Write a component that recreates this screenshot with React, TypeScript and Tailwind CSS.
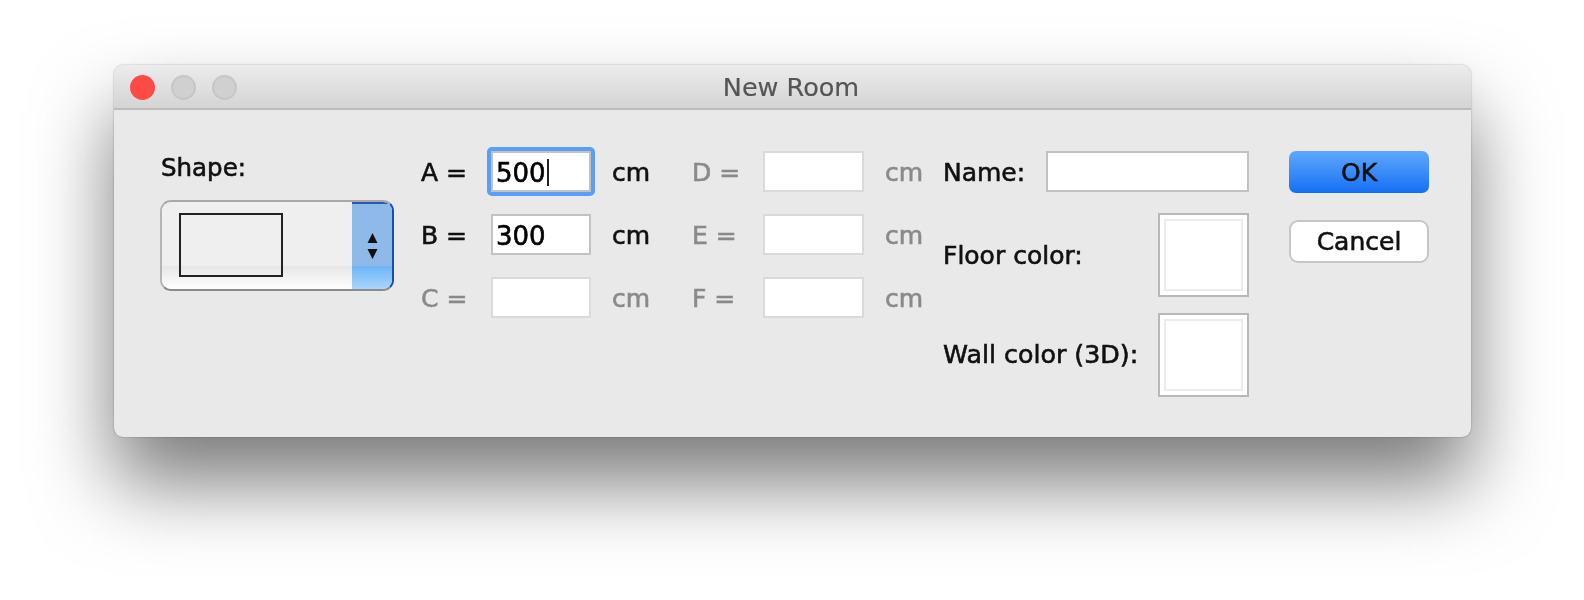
const FONT = "font-['DejaVu_Sans',sans-serif]";

const Field = ({ value, caret, focused, disabled }: { value?: string; caret?: boolean; focused?: boolean; disabled?: boolean }) => (
  <div
    className={`flex h-[41px] w-full items-center bg-white pl-[3px] pt-[2px] text-[26px] leading-none text-black border-2 ${
      disabled ? "border-[#dadada]" : "border-[#c2c2c2]"
    } ${focused ? "outline-[4px] outline-[#5a9ef5] rounded-[1px] border-[#5a9ef5]" : ""}`}
  >
    {value}
    {caret && <span className="ml-[1px] h-[27px] w-[2px] bg-[#222]" />}
  </div>
);

const FieldRow = ({ label, value, caret, focused, disabled }: { label: string; value?: string; caret?: boolean; focused?: boolean; disabled?: boolean }) => (
  <>
    <div className={`pt-[1px] text-[25px] leading-none ${disabled ? "text-[#8a8a8a]" : "text-[#111]"}`}>{label}</div>
    <Field value={value} caret={caret} focused={focused} disabled={disabled} />
  </>
);

const Unit = ({ disabled }: { disabled?: boolean }) => (
  <div className={`pl-[21px] pt-[1px] text-[25px] leading-none ${disabled ? "text-[#8a8a8a]" : "text-[#111]"}`}>cm</div>
);

const Swatch = () => (
  <div className="h-[84px] w-[91px] border-2 border-[#b8b8b8] bg-white p-[4px]">
    <div className="h-full w-full border-2 border-[#ececec] bg-white" />
  </div>
);

const ShapeSelect = () => (
  <div className="ml-[-1px] flex h-[91px] w-[234px] overflow-hidden rounded-[11px] border-2 border-t-[#a9a9a9] border-r-[#174fb8] border-b-[#8b8b8b] border-l-[#b5b5b5]">
    <div className="flex-1 bg-[linear-gradient(to_bottom,#efefef_0%,#efefef_74%,#e6e6e6_74%,#ffffff_100%)] pl-[17px] pt-[11px]">
      <div className="h-[64px] w-[104px] border-2 border-[#222]" />
    </div>
    <div className="flex w-[40px] items-start justify-center border-t-2 border-t-[#2a58b0] bg-[linear-gradient(to_bottom,#8fb9e9_0%,#8fb9e9_73%,#6db4f6_73%,#a9d6fb_100%)] pt-[29px]">
      <svg width="11" height="26" viewBox="0 0 11 26">
        <path d="M5.5 0 L10.5 10 L0.5 10 Z M0.5 16 L10.5 16 L5.5 26 Z" fill="#111" />
      </svg>
    </div>
  </div>
);

export default function App() {
  return (
    <div className={`h-[600px] w-[1584px] overflow-hidden bg-white pl-[114px] pt-[65px] [-webkit-text-stroke:0.6px_currentColor] ${FONT}`}>
      <div className="flex h-[372px] w-[1357px] flex-col rounded-[9px] bg-[#e9e9e9] shadow-[0_0_2px_rgba(0,0,0,0.35),0_46px_80px_rgba(0,0,0,0.52)] blur-[0.6px]">
        <div className="relative flex h-[45px] items-center justify-center rounded-t-[9px] border-b-2 border-[#bcbcbc] bg-gradient-to-b from-[#ececec] to-[#d4d4d4]">
          <div className="absolute left-[16px] top-[10px] flex gap-[16px]">
            <span className="h-[25px] w-[25px] rounded-full bg-[#fb4b46]" />
            <span className="h-[25px] w-[25px] rounded-full border-2 border-[#c6c6c6] bg-[#d0d0d0]" />
            <span className="h-[25px] w-[25px] rounded-full border-2 border-[#c6c6c6] bg-[#d0d0d0]" />
          </div>
          <span className="pr-[3px] pt-[3px] text-[25.5px] leading-none text-[#555] [-webkit-text-stroke:0.2px_currentColor]">New Room</span>
        </div>

        <div className="flex pl-[47px] pt-[41px]">
          <div className="w-[260px]">
            <div className="mb-[17px] pt-[2px] text-[24.5px] leading-[30px] text-[#111]">Shape:</div>
            <ShapeSelect />
          </div>

          <div className="grid grid-cols-[70px_100px_101px_71px_101px_79px] items-center gap-y-[22px] self-start">
            <FieldRow label="A =" value="500" caret focused />
            <Unit />
            <FieldRow label="D =" disabled />
            <Unit disabled />
            <FieldRow label="B =" value="300" />
            <Unit />
            <FieldRow label="E =" disabled />
            <Unit disabled />
            <FieldRow label="C =" disabled />
            <Unit disabled />
            <FieldRow label="F =" disabled />
            <Unit disabled />
          </div>

          <div className="flex w-[306px] flex-col text-[25px] leading-none text-[#111]">
            <div className="flex h-[41px] items-center justify-between">
              <span className="pt-[1px]">Name:</span>
              <div className="w-[203px]"><Field /></div>
            </div>
            <div className="mt-[21px] flex items-center justify-between">
              <span>Floor color:</span>
              <Swatch />
            </div>
            <div className="mt-[16px] flex items-center justify-between">
              <span className="text-[25.3px]">Wall color (3D):</span>
              <Swatch />
            </div>
          </div>

          <div className="ml-[40px] flex w-[140px] flex-col gap-[27px] text-[25px] leading-none text-[#111]">
            <button className="h-[42px] rounded-[7px] bg-gradient-to-b from-[#5ea7fb] to-[#0f6ff5]">OK</button>
            <button className="h-[43px] rounded-[9px] border-2 border-[#c6c6c6] bg-white">Cancel</button>
          </div>
        </div>
      </div>
    </div>
  );
}
